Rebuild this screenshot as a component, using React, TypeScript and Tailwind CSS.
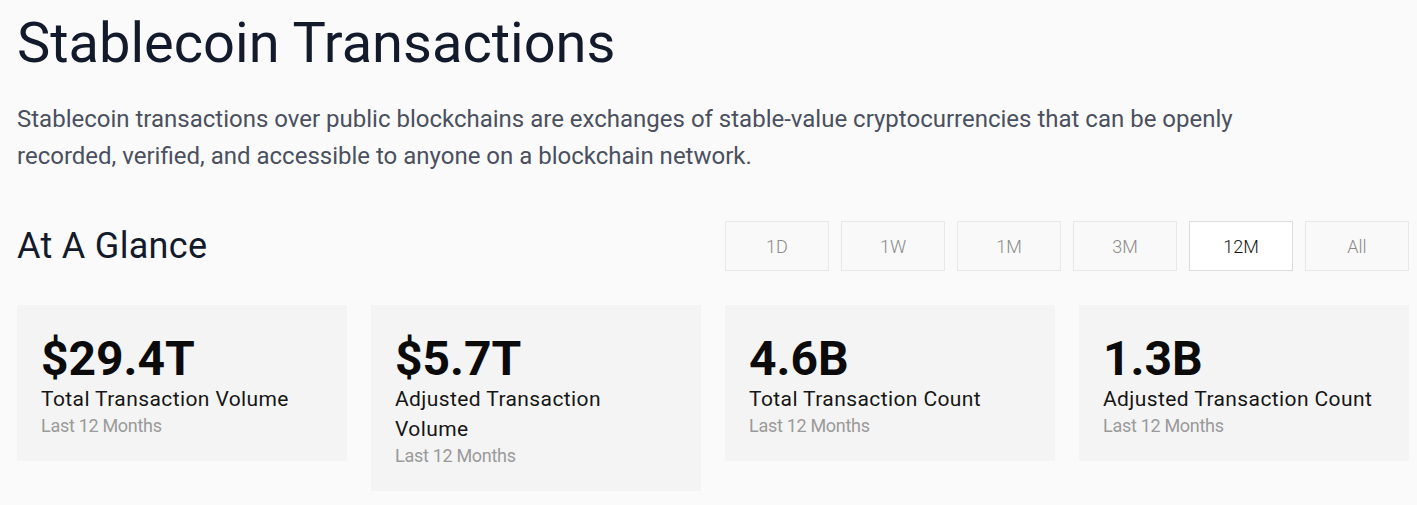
const ranges = ['1D', '1W', '1M', '3M', '12M', 'All'];

const stats = [
  { value: '$29.4T', label: 'Total Transaction Volume' },
  { value: '$5.7T', label: 'Adjusted Transaction Volume' },
  { value: '4.6B', label: 'Total Transaction Count' },
  { value: '1.3B', label: 'Adjusted Transaction Count' },
];

export default function App() {
  return (
    <div className="min-h-screen bg-[#fafafa] pl-[17px] pr-[8px] pt-[15px] font-['Roboto',sans-serif]">
      <h1 className="text-[56px] leading-[56px] text-[#131a2b]">Stablecoin Transactions</h1>
      <p className="mt-[30px] max-w-[1250px] text-[24px] leading-[37px] text-[#4a5060]">
        Stablecoin transactions over public blockchains are exchanges of stable-value cryptocurrencies that can be openly
        recorded, verified, and accessible to anyone on a blockchain network.
      </p>

      <div className="mt-[46px] flex items-center justify-between">
        <h2 className="text-[36px] leading-[50px] tracking-[0.3px] text-[#131a2b]">At A Glance</h2>
        <div className="flex gap-3">
          {ranges.map((r) => (
            <button
              key={r}
              className={`h-[50px] w-[104px] border text-[18px] font-light ${
                r === '12M'
                  ? 'border-[#dcdcdc] bg-white text-[#111111]'
                  : 'border-[#e8e8e8] bg-[#f9f9f9] text-[#8a8a8a]'
              }`}
            >
              {r}
            </button>
          ))}
        </div>
      </div>

      <div className="mt-[34px] grid grid-cols-4 items-start gap-6">
        {stats.map((s) => (
          <StatCard key={s.label} {...s} />
        ))}
      </div>
    </div>
  );
}

function StatCard({ value, label }: { value: string; label: string }) {
  return (
    <div className="bg-[#f4f4f4] px-6 pt-[28px] pb-[23px]">
      <div className="text-[48px] font-bold leading-[51px] text-[#0b0b0b]">{value}</div>
      <div className="text-[21px] leading-[30px] tracking-[0.4px] text-[#161616]">{label}</div>
      <div className="text-[18px] leading-[24px] tracking-[-0.3px] text-[#9a9a9a]">Last 12 Months</div>
    </div>
  );
}
